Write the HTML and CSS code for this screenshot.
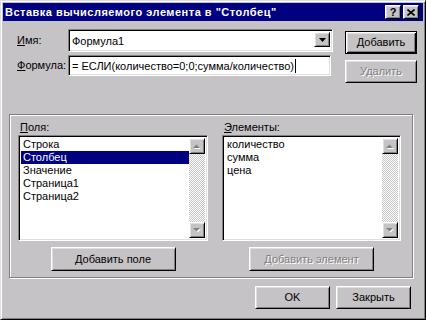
FILE: index.html
```html
<!DOCTYPE html>
<html lang="ru">
<head>
    <meta charset="UTF-8">
    <title>Вставка вычисляемого элемента</title>
    <link rel="stylesheet" href="styles.css">
</head>
<body>
    <div class="window">
        <div class="titlebar">
            <span class="title">Вставка вычисляемого элемента в "Столбец"</span>
            <div class="title-buttons">
                <span class="tbtn raised">?</span>
                <span class="tbtn raised">
                    <svg width="8" height="7" viewBox="0 0 8 7"><path d="M0.5 0.5 L7.5 6.5 M7.5 0.5 L0.5 6.5" stroke="#000" stroke-width="1.6" fill="none"/></svg>
                </span>
            </div>
        </div>

        <div class="top">
            <div class="fields">
                <div class="row">
                    <span class="lbl"><u>И</u>мя:</span>
                    <div class="combo sunken">
                        <span class="combo-text">Формула1</span>
                        <span class="combo-btn raised">
                            <svg width="7" height="4" viewBox="0 0 7 4"><polygon points="0,0 7,0 3.5,4" fill="#000"/></svg>
                        </span>
                    </div>
                </div>
                <div class="row">
                    <span class="lbl"><u>Ф</u>ормула:</span>
                    <div class="edit sunken">= ЕСЛИ(количество=0;0;сумма/количество)<span class="caret"></span></div>
                </div>
            </div>
            <div class="side-buttons">
                <div class="btn default">Добавить</div>
                <div class="btn raised disabled">Удалить</div>
            </div>
        </div>

        <div class="group">
            <div class="col col-fields">
                <div class="lbl"><u>П</u>оля:</div>
                <div class="list sunken">
                    <ul class="items">
                        <li>Строка</li>
                        <li class="selected">Столбец</li>
                        <li>Значение</li>
                        <li>Страница1</li>
                        <li>Страница2</li>
                    </ul>
                    <div class="scrollbar">
                        <span class="sbtn raised">
                            <svg width="14" height="14" viewBox="0 0 14 14"><polygon points="4,10 11,10 7.5,6.5" fill="#fff"/><polygon points="3,9 10,9 6.5,5.5" fill="#808080"/></svg>
                        </span>
                        <span class="track"></span>
                        <span class="sbtn raised">
                            <svg width="14" height="14" viewBox="0 0 14 14"><polygon points="4,6 11,6 7.5,9.5" fill="#fff"/><polygon points="3,5 10,5 6.5,8.5" fill="#808080"/></svg>
                        </span>
                    </div>
                </div>
                <div class="btn raised wide">Добавить поле</div>
            </div>
            <div class="col col-items">
                <div class="lbl"><u>Э</u>лементы:</div>
                <div class="list sunken">
                    <ul class="items">
                        <li>количество</li>
                        <li>сумма</li>
                        <li>цена</li>
                    </ul>
                    <div class="scrollbar">
                        <span class="sbtn raised">
                            <svg width="14" height="14" viewBox="0 0 14 14"><polygon points="4,10 11,10 7.5,6.5" fill="#fff"/><polygon points="3,9 10,9 6.5,5.5" fill="#808080"/></svg>
                        </span>
                        <span class="track"></span>
                        <span class="sbtn raised">
                            <svg width="14" height="14" viewBox="0 0 14 14"><polygon points="4,6 11,6 7.5,9.5" fill="#fff"/><polygon points="3,5 10,5 6.5,8.5" fill="#808080"/></svg>
                        </span>
                    </div>
                </div>
                <div class="btn raised wide disabled">Добавить элемент</div>
            </div>
        </div>

        <div class="bottom">
            <div class="btn raised">OK</div>
            <div class="btn raised">Закрыть</div>
        </div>
    </div>
</body>
</html>
```

FILE: styles.css
```css
body {
    margin: 0;
    background: #c6c3c6;
    font-family: "Liberation Sans", Arial, sans-serif;
    font-size: 11px;
    line-height: 13px;
    color: #000;
}
.window {
    width: 426px;
    height: 320px;
    box-sizing: border-box;
    border: 1px solid;
    border-color: #dfdfdf #000 #000 #dfdfdf;
    box-shadow: inset 1px 1px #fff, inset -1px -1px #808080;
    padding: 2px;
    background: #c6c3c6;
}
.raised {
    box-sizing: border-box;
    background: #c6c3c6;
    border: 1px solid;
    border-color: #fff #000 #000 #fff;
    box-shadow: inset 1px 1px #dfdfdf, inset -1px -1px #808080;
}
.sunken {
    box-sizing: border-box;
    background: #fff;
    border: 1px solid;
    border-color: #808080 #fff #fff #808080;
    box-shadow: inset 1px 1px #000, inset -1px -1px #dfdfdf;
}

/* title */
.titlebar {
    height: 18px;
    background: #000080;
    color: #fff;
    display: flex;
    align-items: center;
    padding-left: 2px;
}
.title {
    flex: 1;
    font-weight: bold;
    letter-spacing: 0.5px;
    white-space: nowrap;
}
.title-buttons {
    display: flex;
    gap: 2px;
    margin-right: 4px;
}
.tbtn {
    width: 16px;
    height: 14px;
    display: flex;
    align-items: center;
    justify-content: center;
    color: #000;
    font-weight: bold;
    font-size: 11px;
}

/* name / formula */
.top {
    display: flex;
    margin-top: 8px;
    padding-left: 14px;
}
.fields {
    display: flex;
    flex-direction: column;
    gap: 3px;
}
.row {
    display: flex;
    align-items: center;
}
.row .lbl {
    width: 51px;
}
.combo {
    width: 265px;
    height: 23px;
    display: flex;
    align-items: flex-start;
    padding: 2px;
}
.combo-text {
    flex: 1;
    padding: 3px 0 0 1px;
}
.combo-btn {
    width: 16px;
    height: 15px;
    display: flex;
    align-items: center;
    justify-content: center;
}
.edit {
    width: 263px;
    height: 21px;
    padding: 3px 0 0 3px;
    white-space: nowrap;
}
.caret {
    display: inline-block;
    width: 1px;
    height: 14px;
    background: #000;
    vertical-align: -3px;
    margin-left: 1px;
}
.side-buttons {
    display: flex;
    flex-direction: column;
    margin-left: 12px;
    padding-top: 2px;
    gap: 6px;
}
.btn {
    width: 72px;
    height: 23px;
    display: flex;
    align-items: center;
    justify-content: center;
}
.btn.default {
    box-sizing: border-box;
    background: #c6c3c6;
    border: 1px solid #000;
    box-shadow: inset 1px 1px #fff, inset -1px -1px #000, inset 2px 2px #dfdfdf, inset -2px -2px #808080;
}
.disabled {
    color: #808080;
    text-shadow: 1px 1px #fff;
}

/* lists */
.group {
    display: flex;
    gap: 14px;
    width: 404px;
    height: 164px;
    box-sizing: border-box;
    margin: 31px 0 0 6px;
    padding: 6px 11px 0 8px;
    border: 1px solid #808080;
    box-shadow: inset 1px 1px #fff, 1px 1px #fff;
}
.col {
    display: flex;
    flex-direction: column;
    align-items: center;
}
.col .lbl {
    align-self: stretch;
    height: 14px;
    padding-left: 2px;
}
.col-fields .list {
    width: 190px;
}
.col-items .list {
    width: 179px;
}
.list {
    height: 106px;
    display: flex;
    padding: 2px;
}
.items {
    flex: 1;
    margin: 0;
    padding: 0;
    list-style: none;
}
.items li {
    height: 13px;
    padding-left: 2px;
}
.items .selected {
    background: #000080;
    color: #fff;
}
.scrollbar {
    width: 16px;
    display: flex;
    flex-direction: column;
}
.sbtn {
    width: 16px;
    height: 16px;
    display: flex;
}
.track {
    flex: 1;
    background: repeating-conic-gradient(#fff 0 25%, #c6c3c6 0 50%) 0 0 / 2px 2px;
}
.btn.wide {
    width: 125px;
    height: 24px;
    margin-top: 6px;
}

/* ok / close */
.bottom {
    display: flex;
    justify-content: flex-end;
    gap: 6px;
    margin-top: 8px;
    padding-right: 12px;
}
.bottom .btn {
    width: 75px;
    height: 23px;
}
```
